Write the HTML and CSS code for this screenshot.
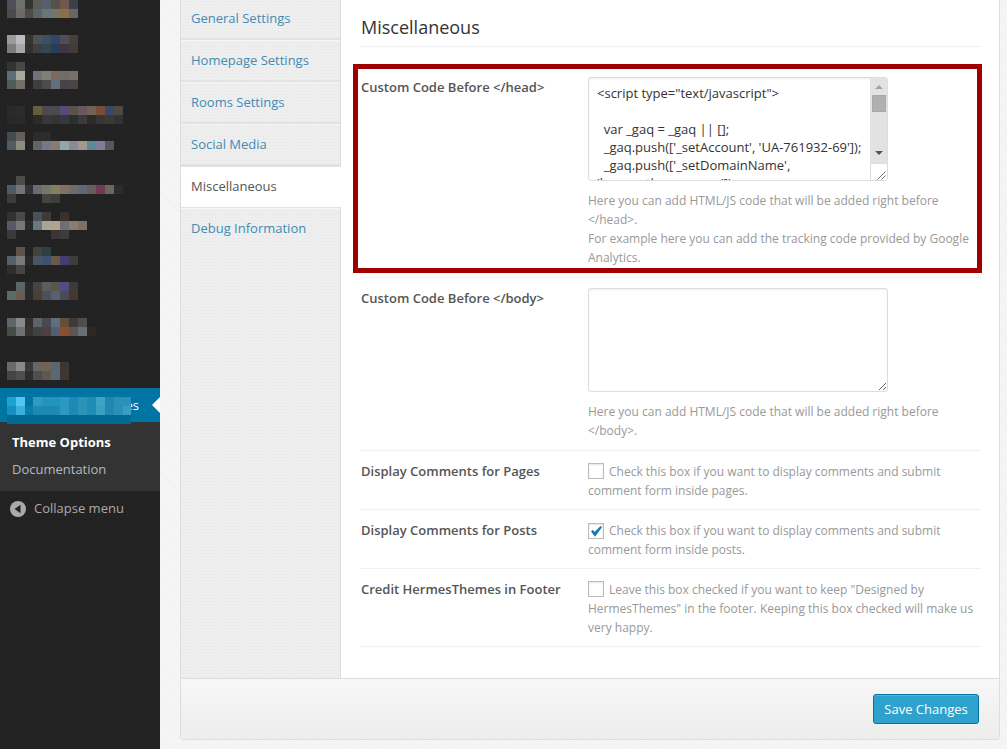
FILE: index.html
```html
<!DOCTYPE html>
<html lang="en">
<head>
<meta charset="utf-8">
<title>Theme Options</title>
<link rel="stylesheet" href="styles.css">
</head>
<body>
<div class="page">
  <aside class="sidebar">
    <svg class="mosaic" width="160" height="388" viewBox="0 0 160 388" aria-hidden="true">
      <rect x="7" y="0" fill="#4f4f5c"/><rect x="16" y="0" fill="#6b716d"/><rect x="25" y="0" fill="#353530"/><rect x="33" y="0" fill="#5c5c55"/><rect x="42" y="0" fill="#56606c"/><rect x="51" y="0" fill="#54524a"/><rect x="60" y="0" fill="#6e5a4c"/><rect x="69" y="0" fill="#3c404a"/>
      <rect x="7" y="9" fill="#4b4b4e"/><rect x="16" y="9" fill="#6e6a68"/><rect x="25" y="9" fill="#4c4c45"/><rect x="33" y="9" fill="#5b6568"/><rect x="42" y="9" fill="#6b7478"/><rect x="51" y="9" fill="#77756a"/><rect x="60" y="9" fill="#8c6e4c"/><rect x="69" y="9" fill="#666664"/>
      <rect x="7" y="35" fill="#9a9a9a"/><rect x="16" y="35" fill="#bcbcc0"/><rect x="25" y="35" fill="#33332f"/><rect x="33" y="35" fill="#4d5252"/><rect x="42" y="35" fill="#3c5060"/><rect x="51" y="35" fill="#2e4668"/><rect x="60" y="35" fill="#4f4d58"/><rect x="69" y="35" fill="#473f3a"/>
      <rect x="7" y="44" fill="#7d7d7d"/><rect x="16" y="44" fill="#a6a8a8"/><rect x="25" y="44" fill="#313130"/><rect x="33" y="44" fill="#3e4040"/><rect x="42" y="44" fill="#364650"/><rect x="51" y="44" fill="#283e58"/><rect x="60" y="44" fill="#3d3640"/><rect x="69" y="44" fill="#423c38"/>
      <rect x="7" y="62" fill="#333"/><rect x="16" y="62" fill="#484848"/>
      <rect x="7" y="71" fill="#5a6e78"/><rect x="16" y="71" fill="#a8a89e"/><rect x="33" y="71" fill="#6f7278"/><rect x="42" y="71" fill="#7f7f7a"/><rect x="51" y="71" fill="#7b6a60"/><rect x="60" y="71" fill="#706c6a"/><rect x="69" y="71" fill="#7c6e66"/>
      <rect x="7" y="80" fill="#4e5c5c"/><rect x="16" y="80" fill="#736e66"/><rect x="33" y="80" fill="#3e3e3e"/><rect x="42" y="80" fill="#4c4c4a"/><rect x="51" y="80" fill="#62707e"/><rect x="60" y="80" fill="#464448"/><rect x="69" y="80" fill="#4a4642"/>
      <rect x="7" y="106" fill="#2a2a2a"/><rect x="16" y="106" fill="#2c2c2c"/><rect x="33" y="106" fill="#6a5a3e"/><rect x="42" y="106" fill="#4e4a4c"/><rect x="51" y="106" fill="#474a4e"/><rect x="60" y="106" fill="#5a4878"/><rect x="69" y="106" fill="#55554e"/><rect x="78" y="106" fill="#6a5560"/><rect x="87" y="106" fill="#6e6452"/><rect x="96" y="106" fill="#7a4e34"/><rect x="105" y="106" fill="#364a68"/><rect x="114" y="106" fill="#4e4a40"/>
      <rect x="7" y="115" fill="#282828"/><rect x="16" y="115" fill="#2a2a2a"/><rect x="33" y="115" fill="#2e2a26"/><rect x="42" y="115" fill="#383838"/><rect x="51" y="115" fill="#343434"/><rect x="60" y="115" fill="#34383f"/><rect x="69" y="115" fill="#2e2e2e"/><rect x="78" y="115" fill="#3a3a3a"/><rect x="87" y="115" fill="#2e2a2a"/><rect x="96" y="115" fill="#363636"/><rect x="105" y="115" fill="#3a3a36"/><rect x="114" y="115" fill="#333"/>
      <rect x="7" y="132" fill="#464c4e"/><rect x="16" y="132" fill="#646060"/><rect x="33" y="132" fill="#2e2c2a"/><rect x="42" y="132" fill="#2e2c2a"/>
      <rect x="7" y="141" fill="#525a62"/><rect x="16" y="141" fill="#8c8c80"/><rect x="33" y="141" fill="#626662"/><rect x="42" y="141" fill="#74788a"/><rect x="51" y="141" fill="#8c7a6c"/><rect x="60" y="141" fill="#8ea8ae"/><rect x="69" y="141" fill="#8a8a9a"/><rect x="78" y="141" fill="#a09a8e"/><rect x="87" y="141" fill="#5e8a96"/><rect x="96" y="141" fill="#7f7f9a"/><rect x="105" y="141" fill="#555a55"/>
      <rect x="16" y="176" fill="#4c4c48"/>
      <rect x="7" y="185" fill="#505a64"/><rect x="16" y="185" fill="#72767a"/><rect x="25" y="185" fill="#333"/><rect x="33" y="185" fill="#666c74"/><rect x="42" y="185" fill="#76766c"/><rect x="51" y="185" fill="#857f5e"/><rect x="60" y="185" fill="#84705e"/><rect x="69" y="185" fill="#6e6e68"/><rect x="78" y="185" fill="#5e687a"/><rect x="87" y="185" fill="#6a5c58"/><rect x="96" y="185" fill="#6e3c4e"/><rect x="105" y="185" fill="#6e665e"/><rect x="114" y="185" fill="#2c2c2a"/>
      <rect x="7" y="194" fill="#3c3c3c"/><rect x="42" y="194" fill="#444440"/><rect x="51" y="194" fill="#3e3e38"/>
      <rect x="7" y="212" fill="#33302e"/><rect x="16" y="212" fill="#4a4a4a"/><rect x="33" y="212" fill="#4a5058"/><rect x="42" y="212" fill="#3e3a36"/><rect x="60" y="212" fill="#3a302e"/>
      <rect x="7" y="221" fill="#585866"/><rect x="16" y="221" fill="#7a7672"/><rect x="25" y="221" fill="#2a2a2a"/><rect x="33" y="221" fill="#6c7880"/><rect x="42" y="221" fill="#a8a498"/><rect x="51" y="221" fill="#b0a48c"/><rect x="60" y="221" fill="#6e6e74"/><rect x="69" y="221" fill="#8c7c70"/><rect x="78" y="221" fill="#7e7266"/>
      <rect x="7" y="230" fill="#3a3a3a"/><rect x="51" y="230" fill="#3c3632"/><rect x="60" y="230" fill="#3a3c3e"/>
      <rect x="16" y="247" fill="#5e5248"/><rect x="33" y="247" fill="#3e443e"/><rect x="42" y="247" fill="#2e3e44"/>
      <rect x="7" y="256" fill="#546068"/><rect x="16" y="256" fill="#7a7a78"/><rect x="25" y="256" fill="#2a2a2a"/><rect x="33" y="256" fill="#4c5660"/><rect x="42" y="256" fill="#3e5070"/><rect x="51" y="256" fill="#6a5848"/><rect x="60" y="256" fill="#423e70"/><rect x="69" y="256" fill="#3e3c3c"/>
      <rect x="7" y="265" fill="#2e2e2e"/><rect x="16" y="265" fill="#484444"/>
      <rect x="16" y="282" fill="#5a6668"/><rect x="25" y="282" fill="#2a2a2a"/><rect x="33" y="282" fill="#4a4440"/><rect x="42" y="282" fill="#5c5c5c"/><rect x="51" y="282" fill="#5c5648"/><rect x="60" y="282" fill="#4e4e80"/><rect x="69" y="282" fill="#3e3a36"/>
      <rect x="7" y="291" fill="#5e6a6a"/><rect x="16" y="291" fill="#6a5c52"/><rect x="25" y="291" fill="#2a2a2a"/><rect x="33" y="291" fill="#4a3e36"/><rect x="42" y="291" fill="#4e5058"/><rect x="51" y="291" fill="#5a6070"/><rect x="60" y="291" fill="#4a4a58"/><rect x="69" y="291" fill="#46382e"/>
      <rect x="7" y="318" fill="#5c6668"/><rect x="16" y="318" fill="#8a8a8a"/><rect x="25" y="318" fill="#332e2a"/><rect x="33" y="318" fill="#5c6468"/><rect x="42" y="318" fill="#464a50"/><rect x="51" y="318" fill="#5a7080"/><rect x="60" y="318" fill="#644e3a"/><rect x="69" y="318" fill="#3e3a3a"/><rect x="78" y="318" fill="#4e4e4e"/>
      <rect x="7" y="327" fill="#484c48"/><rect x="16" y="327" fill="#6c7072"/><rect x="25" y="327" fill="#36322e"/><rect x="33" y="327" fill="#3e4446"/><rect x="42" y="327" fill="#4e4042"/><rect x="51" y="327" fill="#506070"/><rect x="60" y="327" fill="#8a4e30"/><rect x="69" y="327" fill="#5c5654"/><rect x="78" y="327" fill="#6a6e72"/><rect x="87" y="327" fill="#2e2822"/>
      <rect x="7" y="362" fill="#6a6a6a"/><rect x="16" y="362" fill="#8a8a8a"/><rect x="25" y="362" fill="#3a3a3a"/><rect x="33" y="362" fill="#666"/><rect x="42" y="362" fill="#6e6458"/><rect x="51" y="362" fill="#5a6672"/><rect x="60" y="362" fill="#3e3632"/>
      <rect x="7" y="371" fill="#444"/><rect x="16" y="371" fill="#4e4e4e"/><rect x="25" y="371" fill="#2e2e2e"/><rect x="33" y="371" fill="#4e4e4e"/><rect x="42" y="371" fill="#605a4e"/><rect x="51" y="371" fill="#5c6874"/><rect x="60" y="371" fill="#3e3632"/>
    </svg>
    <div class="menu-active">
      <span class="menu-active-label">Hermes Themes</span>
      <span class="menu-arrow"></span>
      <svg class="mosaic mosaic-active" width="124" height="27" viewBox="0 0 124 27" aria-hidden="true">
        <rect x="0" y="0" fill="#1ba3d6"/><rect x="9" y="0" fill="#52c5f0"/><rect x="26" y="0" fill="#2e9cc0"/><rect x="35" y="0" fill="#2394bc"/><rect x="44" y="0" fill="#2394bc"/><rect x="53" y="0" fill="#2a98c0"/><rect x="62" y="0" fill="#1b8ab4"/><rect x="71" y="0" fill="#2a94b8"/><rect x="80" y="0" fill="#1f8cb4"/><rect x="89" y="0" fill="#3ea4c6"/><rect x="98" y="0" fill="#2088b0"/><rect x="107" y="0" fill="#2a90b8"/><rect x="116" y="0" fill="#2a90b8" class="thin"/>
        <rect x="0" y="9" fill="#1690c0"/><rect x="9" y="9" fill="#3cb0dc"/><rect x="18" y="9" fill="#0a7ea8"/><rect x="26" y="9" fill="#1e8ab2"/><rect x="35" y="9" fill="#1e8ab2"/><rect x="44" y="9" fill="#1e8ab2"/><rect x="53" y="9" fill="#2a98c0"/><rect x="62" y="9" fill="#1e8ab2"/><rect x="71" y="9" fill="#2a94b8"/><rect x="80" y="9" fill="#1f8cb4"/><rect x="89" y="9" fill="#3aa0c2"/><rect x="98" y="9" fill="#2088b0"/><rect x="107" y="9" fill="#2a90b8"/><rect x="116" y="9" fill="#3a9cc0" class="thin"/>
        <rect class="strip" x="0" y="18" fill="#006a94"/>
      </svg>
    </div>
    <div class="submenu">
      <a class="submenu-link submenu-current">Theme Options</a>
      <a class="submenu-link">Documentation</a>
    </div>
    <div class="collapse">
      <svg width="16" height="16" viewBox="0 0 16 16" aria-hidden="true"><circle cx="8" cy="8" r="8" fill="#aaa"/><path d="M10.5 3.8v8.4L4.6 8z" fill="#222"/></svg>
      <span>Collapse menu</span>
    </div>
  </aside>

  <main class="main">
    <div class="panel">
      <div class="panel-body">
        <nav class="tabs">
          <a class="tab tab-first">General Settings</a>
          <a class="tab">Homepage Settings</a>
          <a class="tab">Rooms Settings</a>
          <a class="tab">Social Media</a>
          <a class="tab tab-active">Miscellaneous</a>
          <a class="tab tab-last">Debug Information</a>
        </nav>
        <div class="content">
          <h2 class="title">Miscellaneous</h2>
          <div class="highlight">
            <div class="row row-first">
              <div class="label label-code">Custom Code Before &lt;/head&gt;</div>
              <div class="field">
                <div class="code-box">
                  <textarea class="code-input" readonly>&lt;script type="text/javascript"&gt;

  var _gaq = _gaq || [];
  _gaq.push(['_setAccount', 'UA-761932-69']);
  _gaq.push(['_setDomainName',
'hermesthemes.com']);</textarea>
                  <div class="scroll">
                    <span class="scroll-up"></span>
                    <span class="scroll-thumb"></span>
                    <span class="scroll-down"></span>
                    <span class="scroll-fill"></span>
                    <span class="scroll-corner">
                      <svg width="16" height="17" viewBox="0 0 16 17" aria-hidden="true"><path d="M6.5 15.5l8-8M10.5 15.5l4-4" stroke="#777" fill="none"/></svg>
                    </span>
                  </div>
                </div>
                <p class="desc">Here you can add HTML/JS code that will be added right before &lt;/head&gt;.<br>For example here you can add the tracking code provided by Google Analytics.</p>
              </div>
            </div>
          </div>
          <div class="row row-second">
            <div class="label label-code">Custom Code Before &lt;/body&gt;</div>
            <div class="field">
              <textarea class="plain-input"></textarea>
              <p class="desc">Here you can add HTML/JS code that will be added right before &lt;/body&gt;.</p>
            </div>
          </div>
          <div class="row row-check">
            <div class="label">Display Comments for Pages</div>
            <div class="field"><p class="check-text"><span class="check"></span>Check this box if you want to display comments and submit comment form inside pages.</p></div>
          </div>
          <div class="row row-check">
            <div class="label">Display Comments for Posts</div>
            <div class="field"><p class="check-text"><span class="check"><svg width="14" height="14" viewBox="0 0 14 14" aria-hidden="true"><path d="M2 7.5l2-1.7 1.6 2.2L11.5 2 13 3.2 6 12.8z" fill="#1a78b0"/></svg></span>Check this box if you want to display comments and submit comment form inside posts.</p></div>
          </div>
          <div class="row row-check">
            <div class="label">Credit HermesThemes in Footer</div>
            <div class="field"><p class="check-text"><span class="check"></span>Leave this box checked if you want to keep "Designed by HermesThemes" in the footer. Keeping this box checked will make us very happy.</p></div>
          </div>
        </div>
      </div>
      <div class="panel-foot"><button class="save" type="button">Save Changes</button></div>
    </div>
  </main>
</div>
</body>
</html>
```
FILE: styles.css
```css
* { box-sizing: border-box; }
html, body { margin: 0; height: 100%; overflow: hidden; }
body { font-family: "Open Sans", sans-serif; font-size: 13px; color: #444; }

.page { display: flex; width: 1007px; height: 749px; overflow: hidden; }

/* Sidebar */
.sidebar {
  width: 160px; flex: none; display: flex; flex-direction: column;
  background-color: #222;
  background-image: radial-gradient(#262626 1px, transparent 1px);
  background-size: 3px 3px;
}
.mosaic { display: block; flex: none; }
.mosaic rect { width: 9px; height: 9px; }
.mosaic rect.thin { width: 8px; }
.mosaic rect.strip { width: 124px; }

.menu-active {
  position: relative; height: 34px; flex: none; background: #0074a2; color: #fff;
  display: flex; align-items: center; justify-content: flex-end; padding-right: 21px;
}
.menu-active-label { white-space: nowrap; }
.menu-arrow {
  position: absolute; right: 0; top: 9px; width: 0; height: 0;
  border-style: solid; border-width: 8px 8px 8px 0;
  border-color: transparent #fff transparent transparent;
}
.mosaic-active { position: absolute; left: 7px; top: 9px; }

.submenu {
  flex: none; height: 69px; background: #333; padding-top: 7px;
  display: flex; flex-direction: column;
}
.submenu-link { height: 27px; line-height: 27px; padding-left: 12px; color: #b4b9be; }
.submenu-current { color: #fff; font-weight: 700; }

.collapse { display: flex; align-items: center; gap: 8px; padding: 8px 0 0 10px; color: #aaa; line-height: 18px; }
.collapse svg { flex: none; margin-top: 1px; }

/* Main */
.main {
  flex: 1; min-width: 0; padding: 0 7px 9px 20px;
  background-color: #f6f6f6;
  background-image: repeating-linear-gradient(45deg, #f1f1f1 0 1px, transparent 1px 3px);
}
.panel {
  height: 740px; display: flex; flex-direction: column; background: #fff;
  border: solid #ddd; border-width: 0 1px 1px 1px; border-radius: 0 0 4px 4px; overflow: hidden;
}
.panel-body { flex: 1; min-height: 0; display: flex; }

.tabs {
  width: 160px; flex: none; border-right: 1px solid #ddd;
  background-color: #eee;
  background-image: radial-gradient(#e6e6e6 1px, transparent 1px);
  background-size: 3px 3px;
}
.tab {
  display: block; height: 42px; line-height: 38px; padding-left: 10px;
  color: #3f8bb5; border-bottom: 2px solid #e2e2e2; white-space: nowrap;
  border-top: 1px solid #f6f6f6;
}
.tab-first { height: 40px; line-height: 36px; border-top: 0; }
.tab-active {
  background: #fff; color: #555; margin-right: -1px; position: relative;
  border-bottom: 1px solid #e2e2e2; border-top-color: #e2e2e2;
}
.tab-last { border-bottom: 0; }

.content { flex: 1; min-width: 0; padding: 15px 18px 0 20px; }
.title {
  margin: 0 0 17px; padding-bottom: 7px; font-size: 18px; font-weight: 400; line-height: 24px;
  color: #333; border-bottom: 1px dotted #e4e4e4;
}

.highlight { margin: 0 -1px 0 -8px; padding: 0 0 1px 3px; border: 5px solid #a00000; }

.row {
  display: grid; grid-template-columns: 227px 393px;
  border-bottom: 1px dotted #e4e4e4;
}
.row-first { border-bottom: 0; padding-top: 8px; }
.row-second { margin-top: 4px; padding: 10px 0 10px; border-top: 1px dotted #e4e4e4; }
.row-check { padding: 11px 0 9px; }
.label { font-weight: 600; line-height: 19px; color: #555; }
.label-code { margin-top: 1px; }
.field { min-width: 0; }

.code-box {
  display: flex; width: 300px; height: 104px; border: 1px solid #ddd; border-radius: 3px;
  background: #fff; box-shadow: inset 0 1px 2px rgba(0,0,0,.07); overflow: hidden;
}
.code-input {
  flex: 1; min-width: 0; border: 0; margin: 0; padding: 6px 8px; background: transparent;
  font: 13px "Open Sans", sans-serif; color: #333; resize: none; overflow: hidden;
  outline: none; white-space: pre;
}
.scroll {
  width: 17px; flex: none; display: flex; flex-direction: column; align-items: center;
  background-color: #f1f1f1;
  background-image: radial-gradient(#e2e2e2 1px, transparent 1px);
  background-size: 2px 2px;
}
.scroll-up, .scroll-down {
  width: 0; height: 0; flex: none; border-style: solid;
}
.scroll-up { margin: 7px 0 6px; border-width: 0 4px 4px; border-color: transparent transparent #a3a3a3; }
.scroll-thumb { width: 14px; height: 17px; background: #b0b0b0; border: 1px solid #a8a8a8; flex: none; }
.scroll-down { margin: 39px 0 0; border-width: 4px 4px 0; border-color: #555 transparent transparent; }
.scroll-fill { flex: 1; }
.scroll-corner { display: block; width: 17px; height: 17px; background: #fff; border: solid #ddd; border-width: 1px 0 0 1px; flex: none; }
.scroll-corner svg { display: block; }

.plain-input {
  display: block; width: 300px; height: 104px; margin: 0; padding: 6px 8px;
  border: 1px solid #ddd; border-radius: 3px; background: #fff;
  box-shadow: inset 0 1px 2px rgba(0,0,0,.07); outline: none;
  font: 13px "Open Sans", sans-serif; color: #333;
}

.desc { margin: 10px 0 0; font-size: 12px; line-height: 19px; color: #999; }
.check-text { margin: 0; font-size: 12px; line-height: 19px; color: #999; }
.check {
  display: inline-flex; align-items: center; justify-content: center;
  width: 16px; height: 16px; margin-right: 5px; vertical-align: -3px;
  border: 1px solid #bbb; background: #fff; box-shadow: inset 0 1px 2px rgba(0,0,0,.1);
}
.check svg { display: block; }

/* Footer */
.panel-foot {
  flex: none; height: 61px; padding: 15px 20px 0 0; display: flex; justify-content: flex-end; align-items: flex-start;
  border-top: 1px solid #ddd;
  background: linear-gradient(#f7f7f7, #ededed);
}
.save {
  width: 106px; height: 30px; padding: 0; border: 1px solid #0074a2; border-radius: 3px;
  background: #2ea2cc; color: #fff; font: 13px "Open Sans", sans-serif;
  box-shadow: inset 0 1px 0 rgba(120,200,230,.5);
}
```
